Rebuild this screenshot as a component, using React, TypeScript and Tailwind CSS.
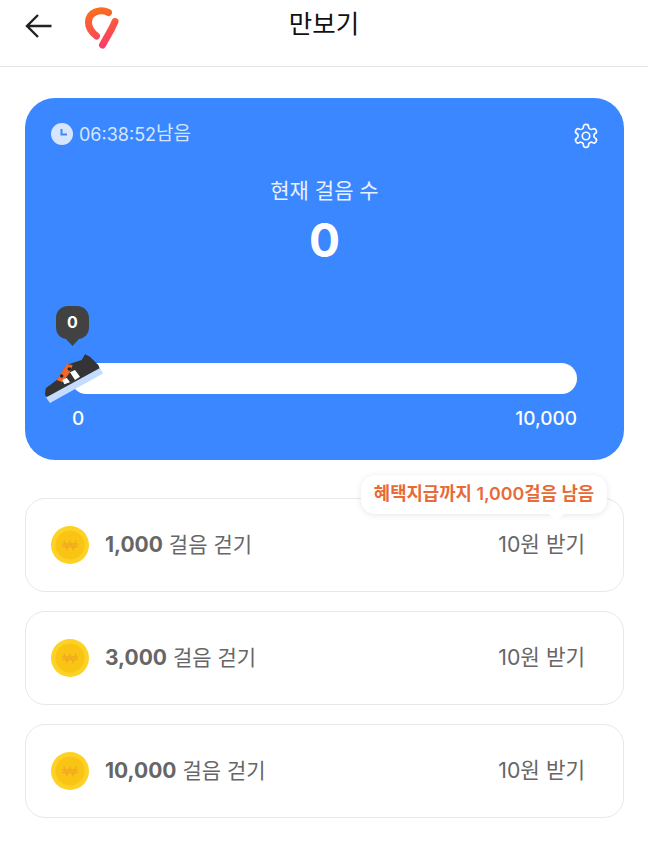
const font = { fontFamily: '"Inter","Noto Sans CJK KR",sans-serif' };

function Coin() {
  return (
    <svg width="38" height="38" viewBox="0 0 38 38" className="shrink-0">
      <circle cx="19" cy="19" r="19" fill="#fdd225" />
      <circle cx="19" cy="19" r="14.500" fill="#f9c414" />
      <path d="M11 18h16M11 20.500h16M13 14.500l2.800 8.500 3.200-7 3.200 7 2.800-8.500" fill="none" stroke="#f3ab1e" strokeWidth="1.500" />
    </svg>
  );
}

function Row({ n, tip }: { n: string; tip?: boolean }) {
  return (
    <div className="relative h-[93.5px] flex items-center justify-between rounded-[20px] border border-[#e8e8e8] bg-white pl-[25px] pr-[38px]">
      <div className="flex items-center gap-[16px]">
        <Coin />
        <div className="text-[21px] text-[#666] whitespace-nowrap">
          <span className="font-bold">{n}</span> 걸음 걷기
        </div>
      </div>
      <div className="text-[21.25px] text-[#666] whitespace-nowrap">10원 받기</div>
      {tip && (
        <div className="absolute right-[16px] top-[-24px] h-[39px] w-[246px] flex items-center justify-center rounded-[14px] bg-white shadow-[0_1px_6px_rgba(0,0,0,0.1)] text-[17.8px] font-semibold text-[#e96a36] whitespace-nowrap">
          혜택지급까지 1,000걸음 남음
          <div className="absolute right-[45px] bottom-[-5px] w-[11px] h-[11px] rotate-45 bg-white" />
        </div>
      )}
    </div>
  );
}

export default function App() {
  return (
    <div className="w-[648px] h-[842px] bg-white overflow-hidden" style={font}>
      <header className="relative h-[67px] border-b border-[#e5e5e5] flex items-start">
        <svg width="30" height="30" viewBox="0 0 30 30" className="absolute left-[24px] top-[11px]" fill="none" stroke="#222" strokeWidth="2.400">
          <path d="M27.500 15H3M14 4 3 15l11 11" />
        </svg>
        <svg width="36" height="44" viewBox="0 0 36 44" className="absolute left-[84px] top-[6px]" fill="none">
          <defs>
            <linearGradient id="lg" gradientUnits="userSpaceOnUse" x1="10" y1="2" x2="20" y2="42">
              <stop offset="0" stopColor="#f9701a" />
              <stop offset="1" stopColor="#fb3a6e" />
            </linearGradient>
          </defs>
          <path d="M24.500 6.500C16 2.500 4.500 6 4.500 16.500c0 5.500 3.500 10 8 13.500" stroke="url(#lg)" strokeWidth="7" strokeLinecap="round" />
          <path d="M31 15.500c-1 2.500-2 4.500-3.500 7.500L18.500 39" stroke="url(#lg)" strokeWidth="7" strokeLinecap="round" />
        </svg>
        <div className="w-full text-center text-[25.5px] leading-[48px] text-[#111]">만보기</div>
      </header>

      <main className="pl-[25px] pr-[24px] pt-[31px]">
        <section className="relative h-[362px] rounded-[30px] bg-[#3a87ff] text-white">
          <div className="absolute left-[26px] top-[22px] flex items-center gap-[6px] text-[#d6e6ff] text-[18px]">
            <svg width="22" height="22" viewBox="0 0 22 22">
              <circle cx="11" cy="11" r="11" fill="#d6e6ff" />
              <path d="M10.500 6v5.500H16" fill="none" stroke="#3a87ff" strokeWidth="2" />
            </svg>
            <span>06:38:52</span>
            <span className="-ml-[6px] text-[19px]">남음</span>
          </div>
          <svg width="28" height="28" viewBox="0 0 24 24" className="absolute right-[24px] top-[24px]" fill="none" stroke="white" strokeWidth="1.400" strokeLinejoin="round">
            <path d="M12.200 2h-.4a2 2 0 0 0-2 2v.2a2 2 0 0 1-1 1.700l-.4.2a2 2 0 0 1-2 0l-.2-.1a2 2 0 0 0-2.700.7l-.2.4a2 2 0 0 0 .7 2.700l.2.1a2 2 0 0 1 1 1.700v.5a2 2 0 0 1-1 1.700l-.2.1a2 2 0 0 0-.7 2.700l.2.4a2 2 0 0 0 2.700.7l.2-.1a2 2 0 0 1 2 0l.4.2a2 2 0 0 1 1 1.700v.2a2 2 0 0 0 2 2h.4a2 2 0 0 0 2-2v-.2a2 2 0 0 1 1-1.700l.4-.2a2 2 0 0 1 2 0l.2.1a2 2 0 0 0 2.700-.7l.2-.4a2 2 0 0 0-.7-2.700l-.2-.1a2 2 0 0 1-1-1.700v-.5a2 2 0 0 1 1-1.700l.2-.1a2 2 0 0 0 .7-2.700l-.2-.4a2 2 0 0 0-2.700-.7l-.2.1a2 2 0 0 1-2 0l-.4-.2a2 2 0 0 1-1-1.700V4a2 2 0 0 0-2-2z" />
            <circle cx="12" cy="12" r="3.200" />
          </svg>

          <div className="pt-[78px] text-center text-[21px] leading-[30px] text-[#e8f1ff]">현재 걸음 수</div>
          <div className="mt-[6px] text-center text-[46px] leading-[56px] font-bold">0</div>

          <div className="absolute left-[31px] top-[208px] w-[33px] h-[40px]">
            <svg width="33" height="41" viewBox="0 0 33 41">
              <path d="M12 0h9c7 0 12 5 12 12v9c0 7-4 11-10 12l-6.500 7-6.500-7C4 32 0 28 0 21v-9C0 5 5 0 12 0z" fill="#424242" />
            </svg>
            <div className="absolute inset-x-0 top-[3px] text-center text-[16px] leading-[26px] font-bold">0</div>
          </div>

          <div className="absolute left-[46px] top-[265px] h-[31px] w-[506px] rounded-full bg-white" />
          <svg width="60" height="52" viewBox="0 0 60 52" className="absolute left-[19px] top-[254px]">
            <path d="M1 43 1.700 36.300 12.700 28 22.700 13 27.700 11.300 37.700 8 41 2.300 46 4.700 54.300 13 56 17 4 46z" fill="#343434" />
            <path d="M2 45.500 56 16 59 21.500 6 51z" fill="#c4dcff" />
            <path d="M12.700 28 22.700 12.300 28.700 13 25.300 21.300 18.300 30.300z" fill="#f0672a" />
            <path d="M26 20.300 31 18 36 24.700 31 28zM18.300 28 22.700 25.700 26 30.300 20.300 32.300z" fill="white" />
            <circle cx="25.300" cy="17" r="1.700" fill="#222" />
            <circle cx="17.700" cy="24" r="1.700" fill="#222" />
          </svg>

          <div className="absolute left-[47px] top-[310px] text-[19px] leading-[22px] font-medium">0</div>
          <div className="absolute right-[47px] top-[310px] text-[19px] leading-[22px] font-medium">10,000</div>
        </section>

        <div className="mt-[38px] flex flex-col gap-[19.5px]">
          <Row n="1,000" tip />
          <Row n="3,000" />
          <Row n="10,000" />
        </div>
      </main>
    </div>
  );
}
